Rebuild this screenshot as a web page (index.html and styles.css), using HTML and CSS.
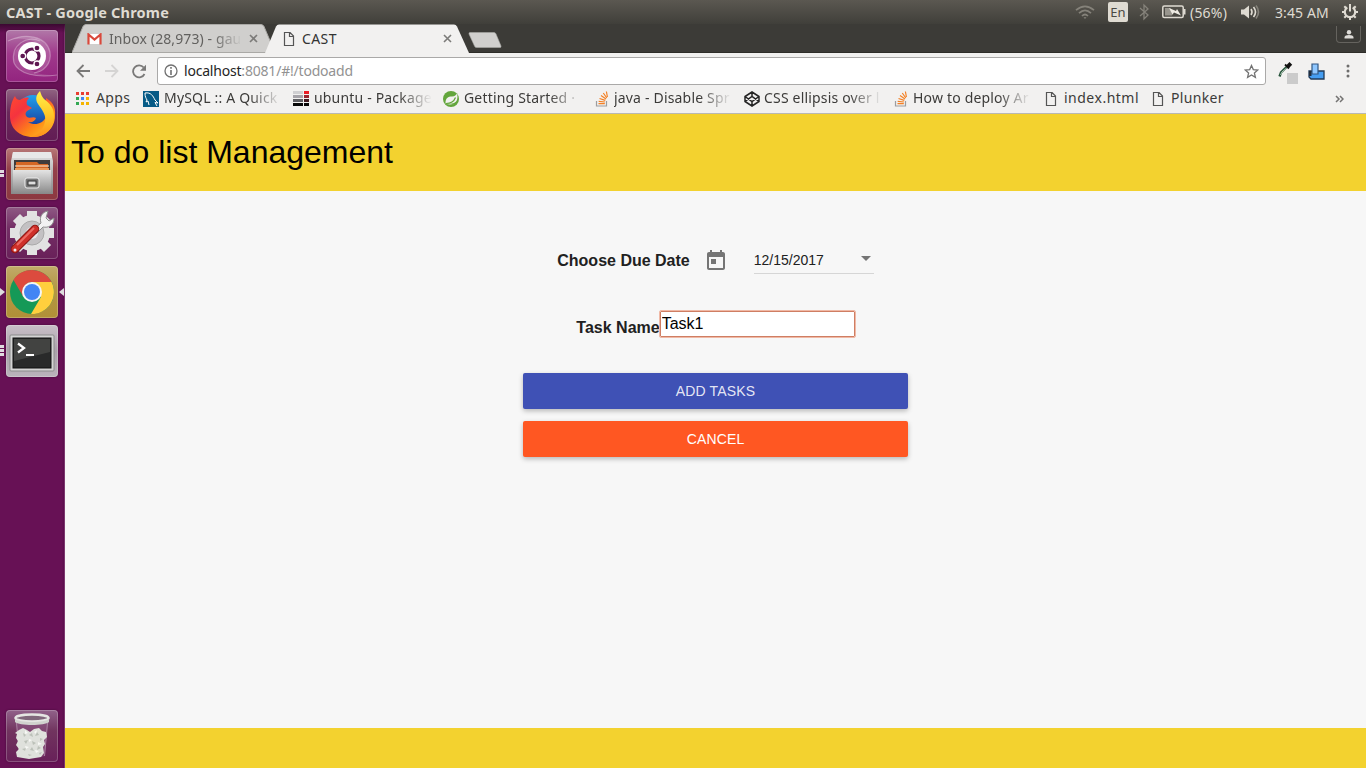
FILE: index.html
```html
<!DOCTYPE html>
<html lang="en">
<head>
<meta charset="utf-8">
<title>CAST</title>
<link rel="stylesheet" href="styles.css">
</head>
<body>
<svg width="0" height="0" class="defs">
  <defs>
    <linearGradient id="metal" x1="0" y1="0" x2="0" y2="1"><stop offset="0" stop-color="#e4e4e4"/><stop offset="1" stop-color="#888"/></linearGradient>
    <linearGradient id="flame" x1="0" y1="0" x2="1" y2="1"><stop offset="0" stop-color="#ff4a2e"/><stop offset=".3" stop-color="#f5333f"/><stop offset=".65" stop-color="#ff8a16"/><stop offset="1" stop-color="#ffd02b"/></linearGradient>
    <linearGradient id="tail" x1="0" y1="0" x2="0" y2="1"><stop offset="0" stop-color="#fff14a"/><stop offset=".5" stop-color="#ffc928"/><stop offset="1" stop-color="#ff8f1c"/></linearGradient>
    <linearGradient id="globe" x1="0" y1="0" x2="0" y2="1"><stop offset="0" stop-color="#1fa2ee"/><stop offset="1" stop-color="#1a3c9c"/></linearGradient>
    <symbol id="doc" viewBox="0 0 12 14"><path d="M1.500 .5h5.5l3.500 3.500v9.500h-9zM6.500 .5v4h4" fill="none" stroke="#555" stroke-width="1.200"/></symbol>
    <symbol id="stack" viewBox="0 0 14 16"><path d="M1.500 10v5h10v-5" fill="none" stroke="#9b9da0" stroke-width="1.200"/><path d="M3.500 12.700h6.300M3.700 10.300l6.200.7M4.500 7.500l5.800 1.900M6 4.500l5 3.500M8.300 2l3.500 5M11.400 .5l1 5.500" stroke="#f48024" stroke-width="1.200" fill="none"/></symbol>
  </defs>
</svg>

<header class="panel">
  <span class="panel-title">CAST - Google Chrome</span>
  <div class="indicators">
    <svg class="wifi" width="22" height="16" viewBox="0 0 22 16"><g fill="none" stroke="#85827a" stroke-width="1.700"><path d="M2 6.200Q11-1.500 20 6.200"/><path d="M5 9.200Q11 3.600 17 9.200"/><path d="M8 12Q11 9 14 12"/></g><path d="M9.500 13.300h3L11 15z" fill="#85827a"/></svg>
    <span class="lang">En</span>
    <svg class="bluetooth" width="10" height="18" viewBox="0 0 10 18"><path d="M1 5l8 7-4 4V2l4 4-8 7" fill="none" stroke="#85827a" stroke-width="1.300"/></svg>
    <svg class="battery" width="24" height="14" viewBox="0 0 24 14"><rect x=".8" y="1" width="20.400" height="11.500" rx="1.500" fill="none" stroke="#dfdbd2" stroke-width="1.500"/><path d="M22.500 4v5.500" stroke="#dfdbd2" stroke-width="2"/><path d="M3 3h5l4 3.500L10 10.500H3z" fill="#99968e"/><path d="M7 3l7 3 1-2 4 6.500-7-3-1.500 2z" fill="#eeeae2"/></svg>
    <span class="percent">(56%)</span>
    <svg class="sound" width="21" height="16" viewBox="0 0 21 16"><path d="M1 5.500h3l5-4v13l-5-4H1z" fill="#dfdbd2"/><g fill="none" stroke-width="1.600"><path d="M11 5q2 3 0 6" stroke="#dfdbd2"/><path d="M13.500 3q4 5 0 10" stroke="#dfdbd2"/><path d="M16 1.500q5 6.500 0 13" stroke="#85827a"/></g></svg>
    <span class="clock">3:45 AM</span>
    <svg class="gear" width="18" height="18" viewBox="0 0 18 18"><g fill="none" stroke="#dfdbd2"><path d="M6.300 4.500a5.200 5.200 0 1 0 5.400 0" stroke-width="2.100"/><path d="M9 1v7.500M1 9h3M14 9h3M3.300 3.300l2 2M14.700 3.300l-2 2M3.300 14.700l2-2M14.700 14.700l-2-2M9 14v3" stroke-width="2"/></g></svg>
  </div>
</header>

<div class="desktop">
  <nav class="launcher">
    <div class="tile tile-dash"><svg viewBox="0 0 52 52"><g fill="none" stroke="#fff" stroke-opacity=".3" stroke-width="1.200"><path d="M2 11C18 3 40 5 44 22 46 34 37 42 28 43"/><path d="M8 33C4 14 22 5 34 11"/><path d="M8 33c5 11 22 15 43 12"/></g><path d="M2 11C18 3 40 5 44 22c2 13-8 20-16 21 10-6 13-14 9-23C32 9 14 6 2 11Z" fill="#fff" opacity=".16"/><path d="M8 33c5 11 22 15 43 12-14 0-25-1-30-9-7-8-3-17 3-22C12 14 5 23 8 33Z" fill="#fff" opacity=".12"/><circle cx="26" cy="26" r="14" fill="#fff"/><circle cx="26" cy="26" r="7" fill="none" stroke="#5e1651" stroke-width="3.200"/><g stroke="#fff" stroke-width="1.300" fill="#5e1651"><circle cx="16.700" cy="26" r="3"/><circle cx="31" cy="18" r="3"/><circle cx="31" cy="34" r="3"/></g></svg></div>
    <div class="tile tile-firefox"><svg viewBox="0 0 52 52"><circle cx="27" cy="22" r="16" fill="url(#globe)"/><path d="M9 7c1 3 3 4 5 4 3-2 6-3 9-2-2 2-3 4-2 7l5 3-5 3c-2 2-2 4 0 6 3 2 6-1 9 1-1 3-4 5-8 4 6 4 15 2 18-5 3-7-1-11 0-19 6 4 10 8 9 18 0 12-10 21-22 21C13 48 4 39 4 27c0-7 1-14 5-20Z" fill="url(#flame)"/><path d="M34 2c-4 4-5 8-2 13 4 6 10 12 6 21-2 6-7 10-13 12 14 1 23-8 23-21 0-9-5-13-10-17-2-2-3-5-4-8Z" fill="url(#tail)"/></svg></div>
    <div class="tile tile-files"><svg viewBox="0 0 52 52"><path d="M7 4h38l2 9v33H5V13z" fill="url(#metal)"/><path d="M7 4h38l1 6H6z" fill="#e8e8e8"/><path d="M8 12h36v12H8z" fill="#403c3c"/><path d="M10 14h21l2 2h9v9H10z" fill="#d56724"/><path d="M9 18h34" stroke="#fff1db" stroke-width="1.200"/><path d="M9 20h34v3H9z" fill="#e99959"/><path d="M7 22h38v24H7z" fill="url(#metal)"/><rect x="19" y="30" width="14" height="10" rx="2" fill="#777" stroke="#eee"/><rect x="22" y="33" width="8" height="4" fill="#ddd" stroke="#333"/></svg></div>
    <div class="tile tile-settings"><svg viewBox="0 0 52 52"><g transform="translate(26 26)"><g fill="#e2e2e2"><rect x="-5" y="-22" width="10" height="44"/><rect x="-5" y="-22" width="10" height="44" transform="rotate(45)"/><rect x="-5" y="-22" width="10" height="44" transform="rotate(90)"/><rect x="-5" y="-22" width="10" height="44" transform="rotate(135)"/><circle r="18"/></g><circle r="12" fill="#c3c1c3" stroke="#aaa"/><circle r="6" fill="#e8e6e8"/></g><path d="M27 23l8-7c-2-6 1-11 7-12l-2 7 3 3 5-3c0 8-6 10-11 9l-7 7z" fill="#f2f2f2" stroke="#8c8c8c"/><path d="M9 42L29 22" stroke="#8c1915" stroke-width="8.500" stroke-linecap="round"/><path d="M9 42L29 22" stroke="#cf302a" stroke-width="6.500" stroke-linecap="round"/><path d="M11 38L28 21" stroke="#ec6b64" stroke-width="2"/><circle cx="9" cy="43" r="1.500" fill="#eee"/></svg></div>
    <div class="tile tile-chrome"><svg viewBox="0 0 52 52"><circle cx="26" cy="26" r="22" fill="#159957"/><path d="M26 16h19.500A22 22 0 0 1 25 48l10-17z" fill="#ffcf3d"/><path d="M7.500 14l10 17q-2-14 8.500-15h19.500C38 1 16 0 7.500 14Z" fill="#dc4b3e"/><circle cx="26" cy="26" r="10" fill="#f5f5f5"/><circle cx="26" cy="26" r="8" fill="#4285f4"/></svg><i class="focus-arrow"></i></div>
    <div class="tile tile-terminal"><svg viewBox="0 0 52 52"><rect x="4" y="10" width="44" height="36" rx="1" fill="#d4d4d4" stroke="#8b8b8b"/><rect x="7" y="13" width="38" height="30" fill="#292a2a" stroke="#111"/><path d="M8 14h36v13L8 36z" fill="#50514f" opacity=".65"/><path d="M12 18.500l6 4.500-6 4.500" fill="none" stroke="#fff" stroke-width="2.300"/><path d="M20 30h8" stroke="#fff" stroke-width="2"/></svg></div>
    <div class="tile tile-trash"><svg viewBox="0 0 52 52"><path d="M10 10l3 36q13 4 26 0l3-36z" fill="#8f5a85" opacity=".5"/><path d="M10.500 13l3 33M41.500 13l-3 33" stroke="#b593af" stroke-width=".8"/><path d="M13 20l4-2 4 2 3 2 4-3 5-1 3 3 4 1 1 5-3 3 1 4-2 3 1 6-3 4-6 1-6 1-6-1-6-1-1-5 3-3-3-4 2-4-2-3 1-4-2-1z" fill="#dfe1dc"/><g fill="#bcc1b9"><path d="M17 23l3 2-2 2zM23 25l3-2 1 4zM31 22l2 3-4 1zM34 28l3 1-3 2zM18 31l4-1-2 4zM26 31l4 2-3 2zM16 39l4-1-1 3zM24 40l2-3 2 4zM32 36l3 2-4 2zM22 44l4 1-3 1zM33 43l3-1-2 3z"/></g><g fill="#f7f8f5"><path d="M19 20l3 3-3 1zM28 22l3-2-1 4zM23 29l3 1-3 2zM32 32l4 2-4 1zM19 36l4 1-3 2zM29 40l4 1-3 2z"/></g><ellipse cx="26" cy="8" rx="16.500" ry="3.500" fill="#80677b" stroke="#e5e6e3" stroke-width="2.500"/><path d="M9 9c4 4 30 4 34 0v3c-4 4-30 4-34 0z" fill="#d0d2ce"/></svg></div>
    <i class="pips pips-files"></i><i class="pips pips-terminal"></i><i class="run-arrow"></i>
  </nav>

  <main class="browser">
    <div class="tabstrip">
      <div class="tab tab-back">
        <svg class="tab-shape" width="204" height="29" viewBox="0 0 204 29"><path d="M0 28.500L11 2.500Q12 .5 14 .5H189Q191 .5 192 2.500L203 28.500Z" fill="#d0cfcd" stroke="#aaa9a6"/></svg>
        <svg class="gmail" width="15" height="12" viewBox="0 0 15 12"><path d="M1 1h13v10H1z" fill="#fff"/><path d="M1.500 11.500V1.500l6 5 6-5v10" fill="none" stroke="#d9483b" stroke-width="2.200"/></svg>
        <span class="tab-label gmail-label">Inbox (28,973) - gau</span>
        <svg class="close" width="9" height="9"><path d="M1 1l7 7M8 1L1 8" stroke="#7c7b79" stroke-width="1.600"/></svg>
      </div>
      <div class="tab tab-front">
        <svg class="tab-shape" width="205" height="29" viewBox="0 0 205 29"><path d="M0 29L11 2.500Q12 .5 14 .5H189Q191 .5 192 2.500L204 29Z" fill="#f2f1f0"/></svg>
        <svg class="docicon" width="12" height="14"><use href="#doc"/></svg>
        <span class="tab-label cast-label">CAST</span>
        <svg class="close" width="9" height="9"><path d="M1 1l7 7M8 1L1 8" stroke="#7c7b79" stroke-width="1.600"/></svg>
      </div>
      <svg class="newtab" width="34" height="16" viewBox="0 0 34 16"><path d="M2 .5h24q1.500 0 2 1.500l5 12q.5 1.500-1 1.500H8.500q-1.500 0-2-1.500L1 2Q.5 .5 2 .5Z" fill="#d0cfcd" stroke="#aaa9a6" stroke-width=".6"/></svg>
      <div class="profile"><svg width="10" height="9" viewBox="0 0 10 9"><circle cx="5" cy="2.300" r="2.200" fill="#dedcd8"/><path d="M.5 8.500V7Q1 5 5 5t4.500 2v1.500z" fill="#dedcd8"/></svg></div>
    </div>

    <div class="toolbar">
      <svg class="back" width="16" height="14" viewBox="0 0 16 14"><path d="M14 7H2M7.500 1l-6 6 6 6" fill="none" stroke="#7a7978" stroke-width="1.800"/></svg>
      <svg class="forward" width="16" height="14" viewBox="0 0 16 14"><path d="M1 7h12M7.500 1l6 6-6 6" fill="none" stroke="#d5d4d3" stroke-width="1.800"/></svg>
      <svg class="reload" width="15" height="15" viewBox="0 0 15 15"><path d="M12.500 10A6 6 0 1 1 11.700 3.500" fill="none" stroke="#7a7978" stroke-width="1.800"/><path d="M14 .8v6H8z" fill="#7a7978"/></svg>
      <div class="omnibox">
        <svg width="14" height="14" viewBox="0 0 14 14"><circle cx="7" cy="7" r="6" fill="none" stroke="#717171" stroke-width="1.300"/><path d="M7 3v1.700M7 6v5" stroke="#717171" stroke-width="1.600"/></svg>
        <span class="url"><b class="host">localhost</b>:8081/#!/todoadd</span>
        <svg class="star" width="15" height="15" viewBox="0 0 15 15"><path d="M7.500 1.500l1.800 4.100 4.500.4-3.400 2.900 1 4.400-3.900-2.300-3.900 2.300 1-4.400L1.200 6l4.500-.4z" fill="none" stroke="#727272" stroke-width="1.300"/></svg>
      </div>
      <svg class="picker" width="20" height="22" viewBox="0 0 20 22"><rect x="9" y="11" width="11" height="11" fill="#cbcbcb"/><path d="M1.500 14.500l1.500-4 5.500-5.500" fill="none" stroke="#28543c" stroke-width="2.400"/><path d="M2.500 13l1.500-3 4.500-4" fill="none" stroke="#b2cab8"/><path d="M7 2.500l4 4" stroke="#111" stroke-width="1.800"/><path d="M9.500 3.500l2-2 1.300 1.300-2 2z" fill="#111" stroke="#111" stroke-width="2"/></svg>
      <svg class="thumb" width="17" height="17" viewBox="0 0 17 17"><path d="M1 8h15v8H3l-2-2z" fill="#459df1" stroke="#203a58" stroke-width="1.300"/><path d="M4 1h6v10H4z" fill="#8fc7ff" stroke="#315783" stroke-width="1.200"/><path d="M1 8h2.500v5H1z" fill="#222d3c"/></svg>
      <svg class="menu" width="4" height="14" viewBox="0 0 4 14"><g fill="#6e6d6c"><circle cx="2" cy="2" r="1.500"/><circle cx="2" cy="7" r="1.500"/><circle cx="2" cy="12" r="1.500"/></g></svg>
    </div>

    <div class="bookmarks">
      <a class="bm bm-apps"><svg width="14" height="14"><g fill="#e93e31"><path d="M0 0h3v3H0zM5 0h3v3H5zM10 0h3v3H10z"/></g><path d="M0 5h3v3H0zM0 10h3v3H0z" fill="#34a853"/><path d="M5 5h3v3H5z" fill="#4285f4"/><path d="M10 5h3v3H10zM5 10h3v3H5zM10 10h3v3H10z" fill="#f5b400"/></svg><span>Apps</span></a>
      <a class="bm bm-mysql fade"><svg width="16" height="16"><path d="M0 0h16v16H0z" fill="#075b86"/><path d="M2 2c6-1 8 3 10 7l3 3-3-.5 2 3.500M2 2c0 4 1 5 2 7l-1 2 2-1 1 4" fill="none" stroke="#fff"/></svg><span>MySQL :: A Quick</span></a>
      <a class="bm bm-ubuntu fade"><svg width="16" height="16"><path d="M0 0h10v3H0z" fill="#d0d0d2"/><path d="M0 4h10v3H0z" fill="#a6a4a9"/><path d="M0 8h10v3H0z" fill="#606064"/><path d="M0 12h10v3H0zM11 12h5v3h-5z" fill="#080808"/><path d="M11 0h5v3h-5z" fill="#ec1c24"/><path d="M11 4h5v3h-5z" fill="#99242c"/><path d="M11 8h5v3h-5z" fill="#421b20"/></svg><span>ubuntu - Package</span></a>
      <a class="bm bm-spring fade"><svg width="17" height="16" viewBox="0 0 17 16"><circle cx="8" cy="8" r="8" fill="#63a63c"/><path d="M14 2.500c1 4 .5 8-3 9.500-3 1.200-5 .3-8.500.8 2 .7 7 .7 8.500.2C8 14 3 14 2.500 12 2.500 7 5 5.500 9 5.500c3 0 4-1.500 5-3Z" fill="#f2f1f0"/><path d="M3 12.500c5 0 8-2 9.500-6" stroke="#63a63c" stroke-width="1.200" fill="none"/></svg><span>Getting Started ·</span></a>
      <a class="bm bm-java fade"><svg width="14" height="16"><use href="#stack"/></svg><span>java - Disable Spr</span></a>
      <a class="bm bm-css fade"><svg width="16" height="16" viewBox="0 0 16 16"><path d="M8 1l7 4.500v5L8 15l-7-4.500v-5zM8 1v4.500M8 15v-4.500M1 5.500l7 5 7-5M1 10.500l7-5 7 5" fill="none" stroke="#242424" stroke-width="1.500"/></svg><span>CSS ellipsis over l</span></a>
      <a class="bm bm-deploy fade"><svg width="14" height="16"><use href="#stack"/></svg><span>How to deploy Ar</span></a>
      <a class="bm bm-index"><svg width="12" height="14"><use href="#doc"/></svg><span>index.html</span></a>
      <a class="bm bm-plunker"><svg width="12" height="14"><use href="#doc"/></svg><span>Plunker</span></a>
      <svg class="more" width="9" height="8"><path d="M1 1l3 3-3 3M5 1l3 3-3 3" fill="none" stroke="#747372" stroke-width="1.500"/></svg>
    </div>

    <section class="page">
      <h1 class="page-title">To do list Management</h1>
      <form class="task-form">
        <div class="date-row">
          <label class="form-label date-label">Choose Due Date</label>
          <svg class="calendar" width="24" height="24" viewBox="0 0 24 24"><path d="M19 3h-1V1h-2v2H8V1H6v2H5c-1.110 0-1.990.9-1.990 2L3 19c0 1.100.89 2 2 2h14c1.100 0 2-.9 2-2V5c0-1.100-.9-2-2-2zm0 16H5V8h14v11zM7 10h5v5H7z" fill="#757575"/></svg>
          <div class="date-field"><span>12/15/2017</span><i class="caret"></i></div>
        </div>
        <div class="name-row">
          <label class="form-label name-label" for="task">Task Name</label>
          <input id="task" class="task-input" type="text" value="Task1">
        </div>
        <button class="action add" type="button">ADD TASKS</button>
        <button class="action cancel" type="button">CANCEL</button>
      </form>
      <footer class="page-footer"></footer>
    </section>
  </main>
</div>
</body>
</html>
```

FILE: styles.css
```css
* { box-sizing: border-box; }
body { margin: 0; width: 1366px; height: 768px; overflow: hidden; display: flex; flex-direction: column; font-family: "Noto Sans", sans-serif; font-size: 14px; background: #f7f7f7; }
svg { display: block; flex: none; }
.defs { position: absolute; }

.panel { height: 24px; flex: none; display: flex; align-items: center; justify-content: space-between; background: linear-gradient(#5b5851, #403f3a); color: #dfdbd2; padding: 0 7px 0 6px; white-space: nowrap; }
.panel-title { font-size: 14.5px; font-weight: 700; letter-spacing: .19px; line-height: 24px; }
.indicators { display: flex; align-items: center; height: 24px; }
.lang { width: 20px; height: 20px; margin-left: 12px; border-radius: 2px; background: #dfdbd2; color: #4a4843; font-size: 13px; line-height: 20px; text-align: center; }
.bluetooth { margin-left: 11px; }
.battery { margin-left: 13px; }
.percent { width: 38px; margin-left: 4px; letter-spacing: .2px; }
.sound { margin-left: 12px; }
.clock { width: 54px; margin-left: 14px; letter-spacing: .1px; }
.gear { margin-left: 12px; }

.desktop { flex: 1; display: flex; min-height: 0; }
.launcher { width: 65px; flex: none; position: relative; display: flex; flex-direction: column; gap: 7px; padding: 6px 7px 6px 6px; background: linear-gradient(#3b0831, #63105a00 9px), linear-gradient(90deg, #671155 62px, #590e4b 64px, #7d376f 64px); }
.tile { width: 52px; height: 52px; flex: none; border-radius: 4px; position: relative; box-shadow: inset 0 0 0 1px #ffffff38, 0 0 2px #26001f99; }
.tile svg { width: 52px; height: 52px; }
.tile-dash { background: linear-gradient(#b178a8, #a03a8c 45%, #93247f); }
.tile-firefox { background: linear-gradient(#906482, #6a285b 45%, #621c54); }
.tile-files { background: linear-gradient(#b87877, #94414a 40%, #8c3840); }
.tile-settings { background: linear-gradient(#8f5a84, #742f66 40%, #692059); }
.tile-chrome { background: linear-gradient(#c2aa69, #b29845 45%, #b19037); }
.tile-terminal { background: linear-gradient(#c9c0c8, #aaa1aa 50%, #bab4bb); }
.tile-trash { margin-top: auto; background: linear-gradient(#91628a, #71345f 40%, #682059); }
.focus-arrow { position: absolute; left: 53px; top: 22px; border: solid transparent; border-width: 4px 5px 4px 0; border-right-color: #ddd; }
.run-arrow { position: absolute; left: 0; top: 264px; border: solid transparent; border-width: 4px 0 4px 5px; border-left-color: #ddd; }
.pips { position: absolute; left: 0; width: 4px; background: repeating-linear-gradient(#e0dbe0 0 3px, transparent 3px 4px); }
.pips-files { top: 146px; height: 7px; }
.pips-terminal { top: 321px; height: 11px; }

.browser { flex: 1; min-width: 0; display: flex; flex-direction: column; background: #f2f1f0; }
.tabstrip { height: 29px; flex: none; display: flex; position: relative; background: #3c3b37; border-bottom: 1px solid #2e2d29; padding-left: 7px; }
.tab { height: 29px; display: flex; align-items: center; position: relative; }
.tab > * { position: relative; }
.tab .tab-shape { position: absolute; left: 0; top: 0; }
.tab-back { width: 197px; padding: 0 11px 0 15px; }
.tab-front { width: 202px; padding: 0 15px 0 18px; z-index: 1; margin-left: -4px; }
.tab-label { line-height: 29px; white-space: nowrap; overflow: hidden; }
.gmail-label { width: 134px; margin-left: 7px; color: #62615f; letter-spacing: .1px; -webkit-mask-image: linear-gradient(90deg, #000 104px, transparent 133px); mask-image: linear-gradient(90deg, #000 104px, transparent 133px); }
.cast-label { margin-left: 7px; color: #333; letter-spacing: .4px; }
.tab .close { margin-left: auto; }
.newtab { margin: 8px 0 0 1px; }
.profile { position: absolute; right: 5px; top: 2px; width: 25px; height: 17px; display: flex; align-items: center; justify-content: center; border: 1px solid #65635e; border-top: 0; border-radius: 0 0 4px 4px; }

.toolbar { height: 32px; flex: none; display: flex; align-items: center; padding: 4px 16px 0 11px; }
.forward { margin-left: 12px; }
.reload { margin-left: 12px; }
.omnibox { width: 1109px; height: 28px; flex: none; display: flex; align-items: center; margin-left: 10px; padding: 0 6px; border: 1px solid #aaa9a8; border-radius: 3px; background: #fff; }
.url { margin-left: 6px; padding-bottom: 2px; color: #929292; letter-spacing: -.2px; }
.host { font-weight: 400; color: #252525; }
.star { margin-left: auto; }
.picker { margin-left: 12px; margin-top: 4px; }
.thumb { margin-left: 10px; }
.menu { margin-left: auto; }

.bookmarks { height: 29px; flex: none; display: grid; grid-template-columns: 67px 150px 150px 152px 149px 150px 151px 107px 183px 1fr; align-items: center; padding: 0 0 1px 11px; border-bottom: 1px solid #b9b8b2; color: #3c3b39; }
.bm { display: flex; align-items: center; white-space: nowrap; min-width: 0; letter-spacing: .18px; }
.bm span { overflow: hidden; height: 27px; line-height: 26px; }
.bm-apps span { margin-left: 6px; letter-spacing: .4px; }
.bm-mysql span, .bm-ubuntu span { margin-left: 5px; }
.bm-spring span, .bm-css span { margin-left: 4px; }
.bm-java span, .bm-deploy span { margin-left: 5px; }
.bm-index span { margin-left: 7px; letter-spacing: .5px; }
.bm-plunker span { margin-left: 7px; letter-spacing: .35px; }
.bm.fade span { width: 118px; -webkit-mask-image: linear-gradient(90deg, #000 85px, transparent 118px); mask-image: linear-gradient(90deg, #000 85px, transparent 118px); }

.page { flex: 1; min-height: 0; display: flex; flex-direction: column; background: #f7f7f7; font-family: "Liberation Sans", Arial, sans-serif; }
.page-title { margin: 0; height: 77px; flex: none; padding-left: 6px; background: #f3d22f; color: #000; font-size: 32px; font-weight: 400; line-height: 77px; }
.task-form { flex: 1; display: flex; flex-direction: column; align-items: center; }
.date-row { height: 28px; margin-top: 55px; display: flex; align-items: center; }
.form-label { color: #212121; font-size: 16px; font-weight: 700; }
.date-label { padding-top: 2px; }
.calendar { margin: 2px 0 0 14px; }
.date-field { width: 120px; height: 28px; margin-left: 26px; display: flex; justify-content: space-between; align-items: center; border-bottom: 1px solid #d6d6d6; color: #212121; font-size: 14px; }
.caret { margin: -3px 3px 0 0; border: solid transparent; border-width: 5px 5px 0; border-top-color: #757575; }
.name-row { height: 28px; margin-top: 36px; display: flex; align-items: center; }
.name-label { padding-top: 7px; }
.task-input { width: 195px; height: 26px; padding: 0 1px 1px; border: 1px solid #cf7e63; border-radius: 1px; outline: 1px solid #f0b9a6; background: #fff; color: #000; font: 16px "Liberation Sans", Arial, sans-serif; }
.action { width: 385px; height: 36px; flex: none; margin-top: 12px; padding: 0; border: 0; border-radius: 2px; font: 14px "Liberation Sans", Arial, sans-serif; letter-spacing: .14px; box-shadow: 0 2px 5px #00000042; }
.add { margin-top: 35px; background: #3f51b5; color: #ffffffde; }
.cancel { background: #ff5722; color: #fff; }
.page-footer { height: 40px; flex: none; background: #f3d22f; }
```
